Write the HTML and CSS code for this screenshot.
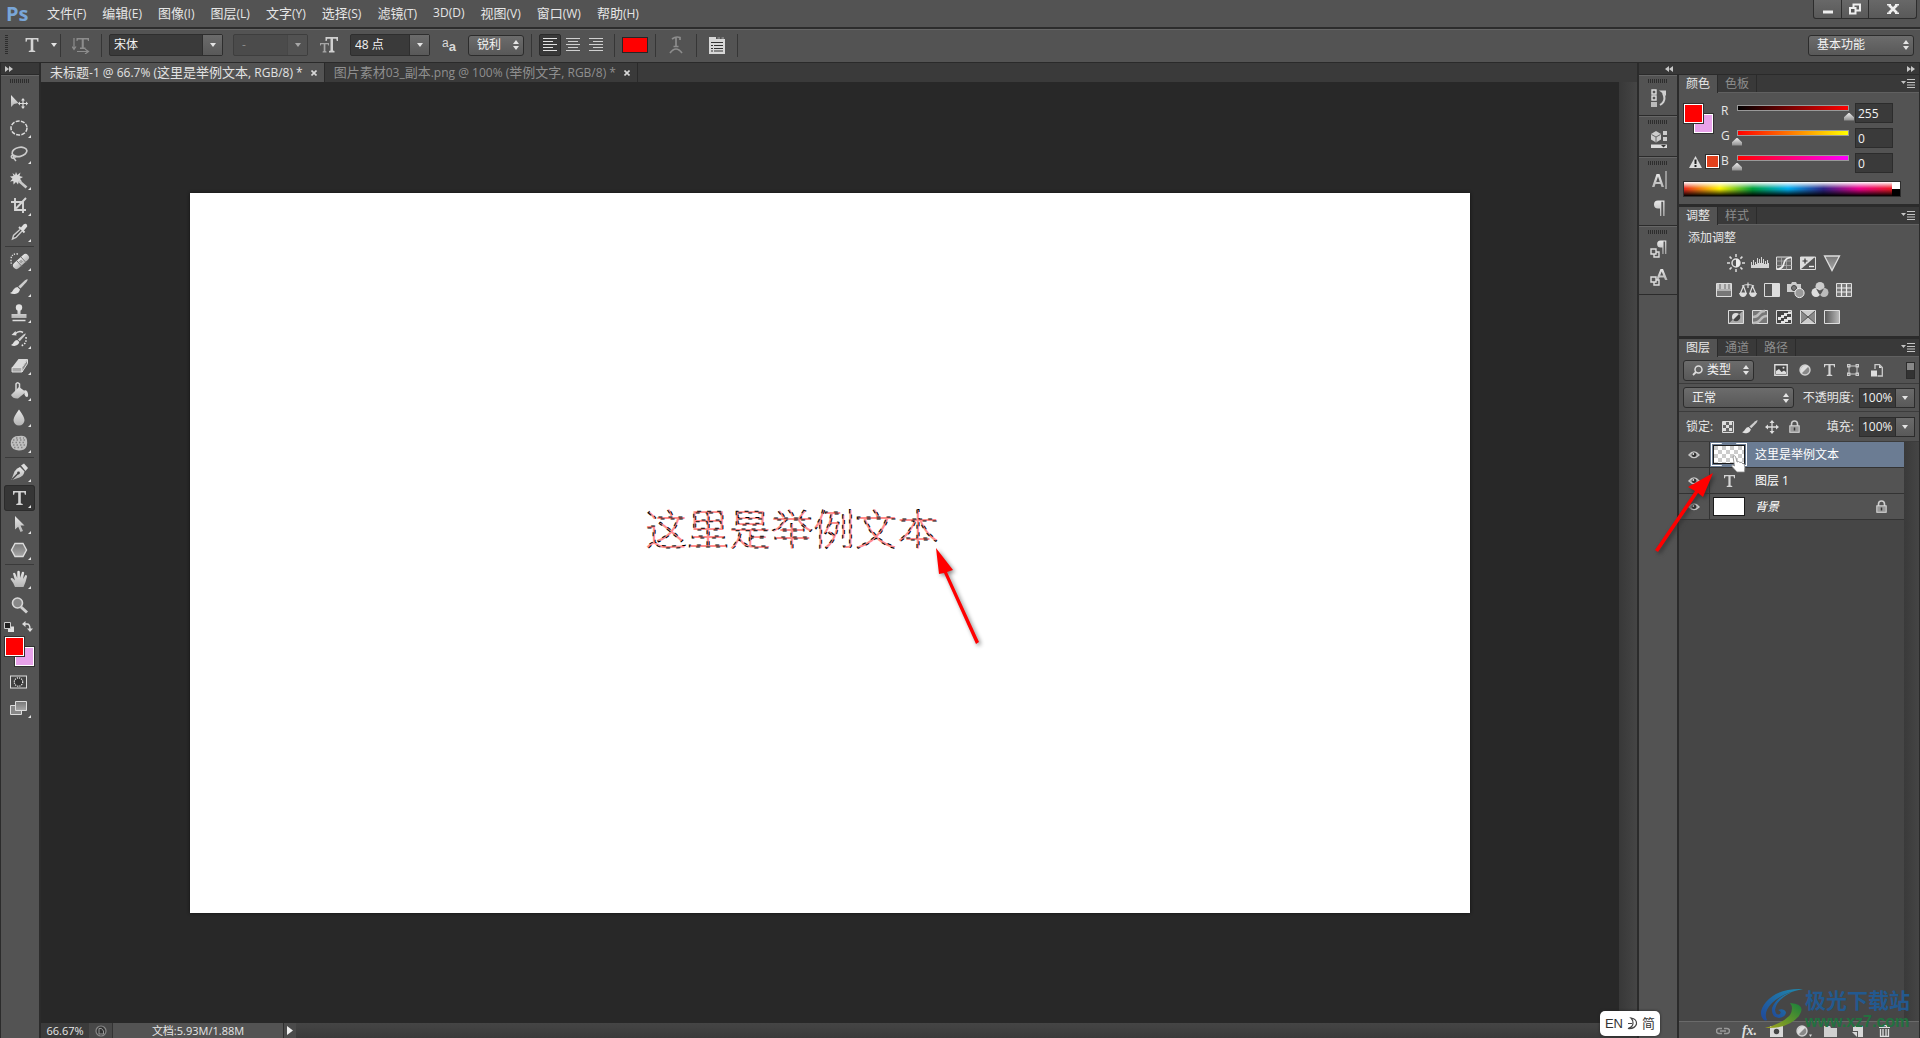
FILE: index.html
```html
<!DOCTYPE html>
<html lang="zh-CN">
<head>
<meta charset="utf-8">
<title>Ps</title>
<link rel="stylesheet" href="styles.css">
</head>
<body>
<svg class="defs" width="0" height="0" aria-hidden="true">
  <defs>
    <linearGradient id="metal" x1="0" y1="0" x2="0" y2="1"><stop offset="0" stop-color="#e8e8e8"/><stop offset="1" stop-color="#b4b4b4"/></linearGradient>
    <linearGradient id="dim" x1="0" y1="0" x2="0" y2="1"><stop offset="0" stop-color="#777"/><stop offset="1" stop-color="#a8a8a8"/></linearGradient>
    <linearGradient id="side" x1="0" y1="0" x2="1" y2="0"><stop offset="0" stop-color="#555"/><stop offset="1" stop-color="#bbb"/></linearGradient>
    <linearGradient id="swirlBlue" x1="0" y1="1" x2="1" y2="0"><stop offset="0" stop-color="#20489a"/><stop offset="1" stop-color="#1f8aae"/></linearGradient>
    <linearGradient id="swirlGreen" x1="0" y1="1" x2="1" y2="0"><stop offset="0" stop-color="#a5a51c"/><stop offset="1" stop-color="#17803c"/></linearGradient>
    <symbol id="caret" viewBox="0 0 6 4"><path d="M0 0H6L3 4z" fill="#e4e4e4"/></symbol>
    <symbol id="updown" viewBox="0 0 6 10"><path d="M0 4L3 0L6 4zM0 6H6L3 10z" fill="#e4e4e4"/></symbol>
    <symbol id="cross" viewBox="0 0 6 6"><path d="M0.500 0.500L5.500 5.500M5.500 0.500L0.500 5.500" stroke="currentColor" stroke-width="1.600"/></symbol>
    <symbol id="menu" viewBox="0 0 14 9"><path d="M0 2H5L2.500 5z" fill="#c4c4c4"/><path d="M6 .5H14M6 3.500H14M6 6H14M6 8.500H14" stroke="#c4c4c4"/></symbol>
    <symbol id="eye" viewBox="0 0 12 10"><path d="M1 5Q6-1 11 5Q6 10 1 5z" fill="#8b8b8b" stroke="#c6c6c6" stroke-width="1.400"/><circle cx="6" cy="4.800" r="2.200" fill="#2f2f2f"/><circle cx="5.300" cy="4" r=".9" fill="#ddd"/></symbol>
    <symbol id="padlock" viewBox="0 0 11 13"><path d="M2.500 6V4A3 3 0 0 1 8.500 4V6" fill="none" stroke="#cfcfcf" stroke-width="1.600"/><rect x=".8" y="5.800" width="9.400" height="6.500" fill="#999" stroke="#d8d8d8"/><path d="M5.500 7.500V10.500" stroke="#333" stroke-width="1.500"/></symbol>
    <symbol id="tee" viewBox="0 0 12 13"><path d="M0 0H12V3.500H11L10.400 1.400H7.200V11.400L9 12V13H3V12L4.800 11.400V1.400H1.600L1 3.500H0z" fill="#d4d4d4"/></symbol>
    <symbol id="pilcrow" viewBox="0 0 12 16"><path d="M11.500 .5H5A4 4 0 0 0 5 8.500H7V16H8.300V1.800H10.200V16H11.500z" fill="url(#metal)"/></symbol>
    <symbol id="halfdisc" viewBox="0 0 12 12"><circle cx="6" cy="6" r="5" fill="#888" stroke="#cfcfcf" stroke-width="1.400"/><path d="M2.500 9.500A5 5 0 0 1 9.500 2.500z" fill="#ddd"/></symbol>
    <symbol id="brush" viewBox="0 0 18 16"><path d="M17.500 0Q18 1 16.500 3L10.500 9.500L8.300 7.500L15 1.300z" fill="#cdcdcd"/><path d="M7.500 8L10 10.500Q9 14.500 5 15Q2 15.300 0 14Q2.500 13 3.500 10.500Q5 8 7.500 8z" fill="#e0e0e0"/></symbol>
  </defs>
</svg>

<header class="menubar">
  <strong class="logo">Ps</strong>
  <nav class="menus">
    <a href="#"><span class="han">文件</span>(F)</a><a href="#"><span class="han">编辑</span>(E)</a><a href="#"><span class="han">图像</span>(I)</a><a href="#"><span class="han">图层</span>(L)</a><a href="#"><span class="han">文字</span>(Y)</a><a href="#"><span class="han">选择</span>(S)</a><a href="#"><span class="han">滤镜</span>(T)</a><a href="#">3D(D)</a><a href="#"><span class="han">视图</span>(V)</a><a href="#"><span class="han">窗口</span>(W)</a><a href="#"><span class="han">帮助</span>(H)</a>
  </nav>
  <div class="winbtns">
    <button aria-label="最小化"><svg width="12" height="12" viewBox="0 0 12 12"><path d="M1 9H11" stroke="#eee" stroke-width="3"/></svg></button>
    <button aria-label="还原"><svg width="12" height="12" viewBox="0 0 12 12"><path d="M4.500 1.500H11V7.500H4.500z" fill="none" stroke="#eee" stroke-width="2"/><path d="M1 5H6.500V10.500H1z" fill="#555" stroke="#eee" stroke-width="2"/></svg></button>
    <button class="wide" aria-label="关闭"><svg width="12" height="10" viewBox="0 0 12 10"><path d="M2 1L10 9M10 1L2 9" stroke="#eee" stroke-width="2.600"/><path d="M0 .8H4M8 .8H12M0 9.200H4M8 9.200H12" stroke="#eee" stroke-width="1.600"/></svg></button>
  </div>
</header>

<section class="options">
  <span class="grip-v"></span>
  <button class="flat w44" aria-label="文字工具"><svg width="14" height="14"><use href="#tee"/></svg><svg width="6" height="4"><use href="#caret"/></svg></button>
  <i class="sep tight"></i>
  <button class="flat w40" aria-label="切换方向"><svg width="18" height="17" viewBox="0 0 18 17"><path d="M4.500 1H17V4H16L15.500 2.500H11.800V10.500H13.500V12H8V10.500H9.700V2.500H6L5.500 4H4.500z" fill="#8d8d8d"/><path d="M2 1V12M0 9.500L2 12.500L4 9.500M5 14.500H16M13 12L16.500 14.500L13 17" fill="none" stroke="#8d8d8d" stroke-width="1.200"/></svg></button>
  <i class="sep tight"></i>
  <label class="combo font"><select aria-label="字体"><option>宋体</option></select><span class="knob"><svg width="6" height="4"><use href="#caret"/></svg></span></label>
  <label class="combo style off"><select aria-label="字体样式" disabled><option>-</option></select><span class="knob"><svg width="6" height="4"><use href="#caret"/></svg></span></label>
  <span class="flat w42"><svg width="18" height="16" viewBox="0 0 18 16"><path d="M5.500 0H18V4H16.800L16.200 1.700H13V13.500L14.500 14V15.500H9V14L10.500 13.500V1.700H7.300L6.700 4H5.500z" fill="#d0d0d0"/><path d="M0 6H9V8.500H8.200L7.800 7.200H5.400V14L6.500 14.500V15.500H2.600V14.500L3.700 14V7.200H1.200L.8 8.500H0z" fill="#a5a5a5"/></svg></span>
  <label class="combo size"><select aria-label="字号"><option>48 点</option></select><span class="knob"><svg width="6" height="4"><use href="#caret"/></svg></span></label>
  <span class="flat w38 aa"><small>a</small><b>a</b></span>
  <label class="pick aamode"><select aria-label="消除锯齿"><option>锐利</option></select><svg width="6" height="10"><use href="#updown"/></svg></label>
  <i class="sep"></i>
  <div class="aligns">
    <button class="on" aria-label="左对齐"><svg width="16" height="14" viewBox="0 0 16 14"><path d="M1 .5H15M1 3.500H11M1 6.500H15M1 9.500H11M1 12.500H15" stroke="#e2e2e2"/></svg></button>
    <button aria-label="居中对齐"><svg width="16" height="14" viewBox="0 0 16 14"><path d="M1 .5H15M3 3.500H13M1 6.500H15M3 9.500H13M1 12.500H15" stroke="#d0d0d0"/></svg></button>
    <button aria-label="右对齐"><svg width="16" height="14" viewBox="0 0 16 14"><path d="M1 .5H15M5 3.500H15M1 6.500H15M5 9.500H15M1 12.500H15" stroke="#d0d0d0"/></svg></button>
  </div>
  <i class="sep"></i>
  <button class="textcolor" aria-label="文本颜色"></button>
  <i class="sep last"></i>
  <button class="flat w40" aria-label="变形文字"><svg width="14" height="18" viewBox="0 0 14 18"><path d="M3 3Q7 0 11 1.500V4M7 1.500V10.500M4.500 10.500H9.500M1 17Q7 9 13 17" fill="none" stroke="#8d8d8d" stroke-width="1.700"/></svg></button>
  <i class="sep tight"></i>
  <button class="flat w40" aria-label="字符面板"><svg width="16" height="17" viewBox="0 0 16 17"><path d="M0 0H7V2H16V17H0z" fill="#d8d8d8"/><path d="M8.500 1H11M12.500 1H15" stroke="#aaa"/><path d="M2 5.500H14M2 8.500H4M5 8.500H14M2 11.500H4M5 11.500H14M2 14H4M5 14H14" stroke="#333" stroke-width="1.200"/></svg></button>
  <i class="sep tight"></i>
  <label class="pick workspace-pick"><select aria-label="工作区"><option>基本功能</option></select><svg width="6" height="10"><use href="#updown"/></svg></label>
</section>

<main class="workspace">
  <aside class="tools">
    <div class="dockhead left"><svg width="8" height="6" viewBox="0 0 8 6"><path d="M0 0L4 3L0 6zM4 0L8 3L4 6z" fill="#c8c8c8"/></svg></div>
    <div class="toolbody">
      <span class="grip-h"></span>
      <div class="toollist">
      <button aria-label="移动"><svg viewBox="0 0 36 26"><path d="M10 6V18L13 15L17.500 14z" fill="url(#metal)"/><path d="M22 10V19M17.500 14.500H26.500" stroke="#ddd" stroke-width="1.200"/><path d="M20 11.500L22 9L24 11.500zM20 17.500L22 20L24 17.500zM19 12.500L17 14.500L19 16.500zM25 12.500L27 14.500L25 16.500z" fill="#ddd"/></svg></button>
      <button class="more" aria-label="椭圆选框"><svg viewBox="0 0 36 26"><ellipse cx="18" cy="13" rx="8" ry="7" fill="none" stroke="#ddd" stroke-width="1.500" stroke-dasharray="4 1.300"/></svg></button>
      <button class="more" aria-label="套索"><svg viewBox="0 0 36 26"><ellipse cx="18.500" cy="11" rx="7.500" ry="4.500" transform="rotate(-12 18 11)" fill="none" stroke="#ccc" stroke-width="1.700"/><path d="M12 14Q9 15 11 17Q15 18 14 15Q12 13 12.500 17L15 20" fill="none" stroke="#ccc" stroke-width="1.400"/></svg></button>
      <button class="more" aria-label="魔棒"><svg viewBox="0 0 36 26"><path d="M15 5L16.300 8L19.500 5.500L18.500 9L22 10L19 11.700L21 14.500L17.700 14.500L17 17.500L15 15L12.500 17.500L12.300 14L9 14.500L11.500 11.700L9 9.500L12.500 9L11.500 6L14 8z" fill="#d8d8d8"/><path d="M18 14L25.500 20.500" stroke="#c8c8c8" stroke-width="2.600"/></svg></button>
      <button class="more" aria-label="裁剪"><svg viewBox="0 0 36 26"><path d="M14 5V17H25M10 9H22V20M25 5L15 15.500" fill="none" stroke="#d6d6d6" stroke-width="1.900"/></svg></button>
      <button class="more" aria-label="吸管"><svg viewBox="0 0 36 26"><path d="M19.500 9L22.500 5.500Q25 4 26 6Q27 7.500 25 9L22 12.500z" fill="#e0e0e0"/><path d="M18 8L23.500 13.500" stroke="#ddd" stroke-width="2"/><path d="M19 10.500L12.500 16.500L11.500 20L15 18.500L21 12" fill="#444" stroke="#ccc" stroke-width="1.400"/></svg></button>
      <hr>
      <button class="more" aria-label="修复画笔"><svg viewBox="0 0 36 26"><path d="M17 6Q10 5 10 12Q10 16 11 17" fill="none" stroke="#ddd" stroke-width="1.400" stroke-dasharray="1.300 1.300"/><rect x="10.500" y="10" width="19" height="7" rx="3.500" transform="rotate(-42 20 13.500)" fill="url(#metal)"/><path d="M16 13L21 18.500M20 9L25 14.500" stroke="#777"/><path d="M18.500 13.500H22M20 12V15.500" stroke="#777" stroke-dasharray="1 1"/></svg></button>
      <button class="more" aria-label="画笔"><svg viewBox="0 0 36 26"><use href="#brush" x="9" y="5" width="18" height="16"/></svg></button>
      <button class="more" aria-label="仿制图章"><svg viewBox="0 0 36 26"><circle cx="18" cy="7.500" r="3.200" fill="#e2e2e2"/><path d="M16.500 9H19.500V14H25.500V18H10.500V14H16.500z" fill="url(#metal)"/><path d="M11.500 20.500H24.500" stroke="#ddd" stroke-width="1.500"/></svg></button>
      <button class="more" aria-label="历史记录画笔"><svg viewBox="0 0 36 26"><use href="#brush" x="10" y="7" width="15" height="14"/><path d="M14 8Q18 4 22 6.500" fill="none" stroke="#ddd" stroke-width="1.500"/><path d="M10.500 9L14.500 5L15.500 9.500z" fill="#ddd"/><path d="M25 11Q26 18 20 20" fill="none" stroke="#eee" stroke-width="1.500" stroke-dasharray="1.500 1.500"/></svg></button>
      <button class="more" aria-label="橡皮擦"><svg viewBox="0 0 36 26"><path d="M11 15.500L17.500 7H26.500L21 15.500z" fill="#dadada"/><path d="M11 15.500H21V20H11z" fill="#a8a8a8" stroke="#ddd"/><path d="M21 15.500L26.500 7.500V11.500L21 20z" fill="#8a8a8a" stroke="#ddd"/></svg></button>
      <button class="more" aria-label="油漆桶"><svg viewBox="0 0 36 26"><path d="M10 17L18 9L25 14L17 20.500Q12 21 10 17z" fill="url(#metal)"/><path d="M15 13V6Q16.500 3.500 18.500 6V12" fill="none" stroke="#d8d8d8" stroke-width="1.500"/><path d="M23.500 12Q27.500 12 27 18.500Q24.500 20 23.500 16.500z" fill="#ddd"/></svg></button>
      <button class="more" aria-label="模糊"><svg viewBox="0 0 36 26"><path d="M18 5.500Q23.500 13 23.500 16A5.500 5.500 0 0 1 12.500 16Q12.500 13 18 5.500z" fill="url(#metal)"/></svg></button>
      <button class="more" aria-label="海绵"><svg viewBox="0 0 36 26"><path d="M10 11Q12 5.500 18 6Q25 5 26 10Q27 17 23 19.500Q17 21.500 12.500 19Q9 16.500 10 11z" fill="#c0c0c0"/><path d="M12 10H25M11 12.500H25M12 15H25M13 17.500H23M15 8H23" stroke="#858585" stroke-width="1.300" stroke-dasharray="1.500 2"/></svg></button>
      <hr>
      <button class="more" aria-label="钢笔"><svg viewBox="0 0 36 26"><path d="M20 6.500L23 4.500L27 9L24.500 12z" fill="#ddd"/><path d="M19 8L23.500 12.500Q22.500 17 18.500 18.500L11 21L10.500 20.500L13.500 12.500Q15.500 9 19 8z" fill="url(#metal)"/><path d="M11 20.500L17 14.500" stroke="#444" stroke-width="1.200"/><circle cx="17.500" cy="14" r="1.400" fill="#444"/></svg></button>
      <button class="more on" aria-label="文字"><svg viewBox="0 0 36 26"><use href="#tee" x="12" y="6" width="13" height="14"/></svg></button>
      <button class="more" aria-label="路径选择"><svg viewBox="0 0 36 26"><path d="M14 5L23.500 14.500H19.500L22 20L19.500 21L17.200 15.700L14 18.500z" fill="url(#metal)"/></svg></button>
      <button class="more" aria-label="多边形"><svg viewBox="0 0 36 26"><path d="M14 6.500H22L25.500 13L22 19.500H14L10.500 13z" fill="url(#dim)" stroke="#ddd" stroke-width="1.400"/></svg></button>
      <hr>
      <button class="more" aria-label="抓手"><svg viewBox="0 0 36 26"><path d="M14 21Q13 17.500 9.500 13Q10.500 11 13 13.500L14 14.500L12 7.500Q13.200 6 14.300 7.500L16.200 12L16.300 5.500Q17.600 4 18.800 5.500L19 12L21 6Q22.500 5 23.200 6.700L22 13L24.500 9Q26 8.500 26 10.500Q25 15.500 22.500 21z" fill="url(#metal)"/></svg></button>
      <button aria-label="缩放"><svg viewBox="0 0 36 26"><path d="M20 15L26 20.500" stroke="#d0d0d0" stroke-width="3"/><circle cx="16.500" cy="11" r="5" fill="#888" stroke="#d8d8d8" stroke-width="1.600"/></svg></button>
      </div>
      <div class="swaptools">
        <svg width="10" height="10" viewBox="0 0 10 10"><path d="M4 4.500H10V10H4z" fill="#e0e0e0"/><path d="M.5 .5H6.500V6.500H.5z" fill="#222" stroke="#ccc"/></svg>
        <svg width="11" height="11" viewBox="0 0 11 11"><path d="M3 3H5Q8 3 8 8" fill="none" stroke="#ddd" stroke-width="1.400"/><path d="M0 3L3.500 0V6zM5 7.500H11L8 11z" fill="#ddd"/></svg>
      </div>
      <div class="swatches big"><button class="bg" aria-label="背景色"></button><button class="fg" aria-label="前景色"></button></div>
      <div class="toollist modes">
      <button aria-label="快速蒙版"><svg viewBox="0 0 36 26"><rect x="9.500" y="7" width="16" height="12" fill="#444" stroke="#ddd"/><circle cx="17.500" cy="13" r="4.200" fill="#333" stroke="#eee" stroke-width="1.200" stroke-dasharray="1.200 1"/></svg></button>
      <button class="more" aria-label="屏幕模式"><svg viewBox="0 0 36 26"><path d="M9.500 10.500H20.500V19.500H9.500z" fill="#888" stroke="#ddd"/><path d="M14.500 6.500H25.500V15.500H14.500z" fill="url(#dim)" stroke="#ddd"/></svg></button>
      </div>
    </div>
  </aside>

  <section class="document">
    <div class="tabs">
      <div class="tab on"><a href="#"><span class="han">未标题</span>-1 @ 66.7% (<span class="han">这里是举例文本</span>, RGB/8) *</a><button aria-label="关闭"><svg width="6" height="6"><use href="#cross"/></svg></button></div>
      <div class="tab"><a href="#"><span class="han">图片素材</span>03_<span class="han">副本</span>.png @ 100% (<span class="han">举例文字</span>, RGB/8) *</a><button aria-label="关闭"><svg width="6" height="6"><use href="#cross"/></svg></button></div>
    </div>
    <div class="stage">
      <div class="artboard">
        <svg class="ants" width="320" height="80" viewBox="0 0 320 80"><text x="1" y="54">这里是举例文本</text></svg>
        <svg class="pointer-a" width="60" height="110" viewBox="0 0 60 110"><path d="M10 5L27 27L21 29L53 99L50 101L18 30L13 31z" fill="red"/></svg>
      </div>
    </div>
    <div class="vscroll"></div>
    <footer class="status">
      <span class="zoom">66.67%</span>
      <span class="cam"><svg width="12" height="12" viewBox="0 0 12 12"><circle cx="6" cy="6" r="5" fill="#333" stroke="#888" stroke-width="1.200"/><path d="M4 9V3.500H6.500L8.500 6V9z" fill="none" stroke="#999"/></svg></span>
      <span class="doc">文档:5.93M/1.88M</span>
      <button class="go" aria-label="更多"><svg width="6" height="9" viewBox="0 0 6 9"><path d="M0 0L6 4.500L0 9z" fill="#eee"/></svg></button>
      <span class="hscroll"></span>
    </footer>
  </section>

  <div class="right">
    <div class="dockhead both">
      <svg width="8" height="6" viewBox="0 0 8 6"><path d="M4 0L0 3L4 6zM8 0L4 3L8 6z" fill="#c8c8c8"/></svg>
      <svg width="8" height="6" viewBox="0 0 8 6"><path d="M0 0L4 3L0 6zM4 0L8 3L4 6z" fill="#c8c8c8"/></svg>
    </div>
    <aside class="dock">
      <div class="dockgroup"><span class="grip-h"></span>
        <button aria-label="历史记录"><svg width="16" height="18" viewBox="0 0 16 18"><path d="M1 1H5V5H1zM1 7H5V11H1z" fill="#555" stroke="#ddd" stroke-width="1.400"/><path d="M0 13H6V18H0z" fill="#bbb"/><path d="M9 16Q16 12 12 4" fill="none" stroke="#d0d0d0" stroke-width="2"/><path d="M8 1.500H15V7z" fill="#d0d0d0"/></svg></button></div>
      <div class="dockgroup"><span class="grip-h"></span>
        <button aria-label="属性"><svg width="17" height="18" viewBox="0 0 17 18"><path d="M0 4L5 1L10 4V9.500L5 12.500L0 9.500z" fill="#ccc"/><path d="M0.500 4.500L5 7L9.500 4.500M5 7V12" fill="none" stroke="#666"/><path d="M12 1H16V5H12zM12 7H16V11H12z" fill="#ccc"/><path d="M0 14.500H16V18H0z" fill="#ddd"/><path d="M10 15H15L12.500 17.500z" fill="#333"/></svg></button></div>
      <div class="dockgroup tall"><span class="grip-h"></span>
        <button aria-label="字符"><svg width="15" height="18" viewBox="0 0 15 18"><path d="M0 16L4.500 3H7.500L12 16H9.500L8.500 13H3.500L2.500 16zM4.200 11H7.800L6 5.500z" fill="url(#metal)" fill-rule="evenodd"/><path d="M14 0V18" stroke="#ddd"/></svg></button>
        <button aria-label="段落"><svg width="12" height="16"><use href="#pilcrow"/></svg></button></div>
      <div class="dockgroup tall"><span class="grip-h"></span>
        <button aria-label="段落样式"><svg width="18" height="18" viewBox="0 0 18 18"><use href="#pilcrow" x="6" y="0" width="11" height="14"/><path d="M4 12H9V17H4z" fill="#555" stroke="#ddd" stroke-width="1.400"/><path d="M1 9H6V14H1z" fill="#555" stroke="#ddd" stroke-width="1.400"/></svg></button>
        <button aria-label="字符样式"><svg width="18" height="18" viewBox="0 0 18 18"><path d="M6 12L10.500 1H13L17.500 12H15L14 9.500H9.500L8.500 12zM10.200 7.500H13.200L11.700 3.500z" fill="url(#metal)" fill-rule="evenodd"/><path d="M4 12H9V17H4z" fill="#555" stroke="#ddd" stroke-width="1.400"/><path d="M1 9H6V14H1z" fill="#555" stroke="#ddd" stroke-width="1.400"/></svg></button></div>
    </aside>

    <div class="panels">
      <section class="panel">
        <div class="ptabs"><a class="on" href="#">颜色</a><a href="#">色板</a><button aria-label="菜单"><svg width="14" height="9"><use href="#menu"/></svg></button></div>
        <div class="color">
          <div class="colorleft">
            <div class="swatches small"><button class="bg" aria-label="背景色"></button><button class="fg" aria-label="前景色"></button></div>
            <div class="gamut"><svg width="13" height="12" viewBox="0 0 13 12"><path d="M6.500 0L13 12H0z" fill="#ddd"/><path d="M6.500 3.500V8M6.500 9V11" stroke="#222" stroke-width="2"/></svg><i></i></div>
          </div>
          <div class="channels">
            <label for="r">R</label><input class="range r" id="r" type="range" min="0" max="255" value="255"><input class="num" type="text" aria-label="R 值" value="255">
            <label for="g">G</label><input class="range g" id="g" type="range" min="0" max="255" value="0"><input class="num" type="text" aria-label="G 值" value="0">
            <label for="b">B</label><input class="range b" id="b" type="range" min="0" max="255" value="0"><input class="num" type="text" aria-label="B 值" value="0">
          </div>
          <div class="spectrum"><span class="hues"></span><span class="bw"></span></div>
        </div>
      </section>

      <section class="panel">
        <div class="ptabs"><a class="on" href="#">调整</a><a href="#">样式</a><button aria-label="菜单"><svg width="14" height="9"><use href="#menu"/></svg></button></div>
        <div class="adjust">
          <p>添加调整</p>
          <div class="adjrow">
            <button aria-label="亮度/对比度"><svg viewBox="0 0 18 18"><circle cx="9" cy="9" r="4" fill="#555" stroke="#ddd" stroke-width="1.500"/><path d="M9 5A4 4 0 0 1 9 13z" fill="#eee"/><path d="M9 0V3M9 15V18M0 9H3M15 9H18M2.600 2.600L4.600 4.600M13.400 13.400L15.400 15.400M2.600 15.400L4.600 13.400M13.400 4.600L15.400 2.600" stroke="#ddd" stroke-width="1.500"/></svg></button>
            <button aria-label="色阶"><svg viewBox="0 0 18 18"><path d="M0 14V8H1V11H2V6H3V11H4V8H5V10H6V4H7V9H8V5H9V9H10V3H11V9H12V5H13V10H14V7H15V10H16V6H17V9H18V14z" fill="#d4d4d4"/></svg></button>
            <button aria-label="曲线"><svg viewBox="0 0 18 18"><path d="M1.500 3H16.500V15.500H1.500z" fill="#666" stroke="#ddd"/><path d="M6.500 3V15.500M11.500 3V15.500M1.500 7H16.500M1.500 11.500H16.500" stroke="#aaa" stroke-width=".8"/><path d="M2 15Q8 15 9 9Q10 4 16 3.500" fill="none" stroke="#eee" stroke-width="1.600"/></svg></button>
            <button aria-label="曝光度"><svg viewBox="0 0 18 18"><path d="M1.500 3H16.500V15.500H1.500z" fill="#555" stroke="#ddd"/><path d="M1.500 3H16L1.500 15.500z" fill="#ddd"/><path d="M3.500 7H8.500M6 4.500V9.500" stroke="#333" stroke-width="1.200"/><path d="M10 12.500H15" stroke="#eee" stroke-width="1.400"/></svg></button>
            <button aria-label="自然饱和度"><svg viewBox="0 0 18 18"><path d="M1.500 2H16.500L9 16.500z" fill="url(#dim)" stroke="#ddd" stroke-width="1.300"/></svg></button>
          </div>
          <div class="adjrow">
            <button aria-label="色相/饱和度"><svg viewBox="0 0 18 18"><path d="M1.500 2.500H16.500V15.500H1.500z" fill="#777" stroke="#ddd"/><path d="M2 3H16V8H2z" fill="#ccc"/><path d="M5 3V8M10 3V8M14 3V8" stroke="#999" stroke-width="2"/><path d="M2 9H16" stroke="#eee"/></svg></button>
            <button aria-label="色彩平衡"><svg viewBox="0 0 18 18"><path d="M3 5Q9 2 15 5M9 1.500V7M4.500 5L1.500 12H7L4.500 5M13.500 5L11 12H16.500L13.500 5" fill="none" stroke="#ddd" stroke-width="1.200"/><path d="M0 12H8Q7 16 4 16Q1 16 0 12zM10 12H18Q17 16 14 16Q11 16 10 12z" fill="#ddd"/></svg></button>
            <button aria-label="黑白"><svg viewBox="0 0 18 18"><path d="M1.500 2.500H16.500V15.500H1.500z" fill="#555" stroke="#ddd"/><path d="M9 3H16V15H9z" fill="#ddd"/></svg></button>
            <button aria-label="照片滤镜"><svg viewBox="0 0 18 18"><path d="M0 3H4L5 1H9L10 3H14V11H0z" fill="#ccc"/><circle cx="7" cy="7" r="2.500" fill="#777" stroke="#444"/><circle cx="12.500" cy="12" r="4.600" fill="#999" stroke="#eee"/></svg></button>
            <button aria-label="通道混合器"><svg viewBox="0 0 18 18"><circle cx="9" cy="5.500" r="4.500" fill="#ccc"/><circle cx="5" cy="11.500" r="4.500" fill="#ddd"/><circle cx="13" cy="11.500" r="4.500" fill="#bbb"/><path d="M5 7.500L9 9.500L13 7.500L10.500 12L9 14L7.500 12z" fill="#555"/></svg></button>
            <button aria-label="颜色查找"><svg viewBox="0 0 18 18"><path d="M1.500 2.500H16.500V15.500H1.500z" fill="#777" stroke="#ddd"/><path d="M6.500 3V15M11.500 3V15M2 7H16M2 11H16" stroke="#eee" stroke-width="1.200"/></svg></button>
          </div>
          <div class="adjrow">
            <button aria-label="反相"><svg viewBox="0 0 18 18"><path d="M1.500 2.500H16.500V15.500H1.500z" fill="#aaa" stroke="#ddd"/><path d="M2 15V3H16z" fill="#555"/><circle cx="9" cy="9" r="4" fill="#ddd"/><path d="M6 12A4 4 0 0 0 12 6z" fill="#444"/></svg></button>
            <button aria-label="色调分离"><svg viewBox="0 0 18 18"><path d="M1.500 2.500H16.500V15.500H1.500z" fill="#777" stroke="#ddd"/><path d="M2 9Q6 9 8 6Q10 3 14 3M2 15Q7 15 10 11Q12 8 16 8" fill="none" stroke="#bbb" stroke-width="2.500"/></svg></button>
            <button aria-label="阈值"><svg viewBox="0 0 18 18"><path d="M1.500 2.500H16.500V15.500H1.500z" fill="#444" stroke="#ddd"/><path d="M3 12V9H6V7H9V5H13V3.500H16V6H12V8H9V10H6V12zM6 15V13H9V11H12V9H16V12H13V14H10V15z" fill="#e4e4e4"/></svg></button>
            <button aria-label="可选颜色"><svg viewBox="0 0 18 18"><path d="M1.500 2.500H16.500V15.500H1.500z" fill="#888" stroke="#ddd"/><path d="M2 3L9 9L16 3zM2 15L9 9L16 15z" fill="#ccc"/><path d="M2 3L16 15M16 3L2 15" stroke="#555"/></svg></button>
            <button aria-label="渐变映射"><svg viewBox="0 0 18 18"><path d="M1.500 2.500H16.500V15.500H1.500z" fill="url(#side)" stroke="#ddd"/></svg></button>
          </div>
        </div>
      </section>

      <section class="panel layers">
        <div class="ptabs"><a class="on" href="#">图层</a><a href="#">通道</a><a href="#">路径</a><button aria-label="菜单"><svg width="14" height="9"><use href="#menu"/></svg></button></div>
        <div class="lrow filter">
          <label class="pick kind"><svg class="lens" width="11" height="11" viewBox="0 0 11 11"><circle cx="6.500" cy="4.500" r="3.500" fill="none" stroke="#ddd" stroke-width="1.500"/><path d="M4 7L1 10" stroke="#ddd" stroke-width="1.800"/></svg><select aria-label="筛选"><option>类型</option></select><svg width="6" height="10"><use href="#updown"/></svg></label>
          <div class="filters">
            <button aria-label="像素"><svg width="14" height="12" viewBox="0 0 14 12"><path d="M.8 .8H13.200V11.200H.8z" fill="#444" stroke="#ddd" stroke-width="1.400"/><path d="M2 10V7L5 5L7.500 8L10 6.500L12 8V10z" fill="#ddd"/><circle cx="9.500" cy="3.800" r="1" fill="#ddd"/></svg></button>
            <button aria-label="调整图层"><svg width="12" height="12"><use href="#halfdisc"/></svg></button>
            <button aria-label="文字图层"><svg width="11" height="12"><use href="#tee"/></svg></button>
            <button aria-label="形状图层"><svg width="12" height="12" viewBox="0 0 12 12"><path d="M2 2H10V10H2z" fill="none" stroke="#ccc"/><path d="M0 0H3.500V3.500H0zM8.500 0H12V3.500H8.500zM0 8.500H3.500V12H0zM8.500 8.500H12V12H8.500z" fill="#ccc"/><path d="M1.500 1.500H2.200M9.800 1.500H10.500M1.500 10.500H2.200M9.800 10.500H10.500" stroke="#444"/></svg></button>
            <button aria-label="智能对象"><svg width="12" height="13" viewBox="0 0 12 13"><path d="M4 5V.7H8.500L11.300 3.500V12H6.500" fill="none" stroke="#ccc" stroke-width="1.300"/><path d="M8 1V4H11M0 6.500H6V12.500H0z" fill="#ddd"/></svg></button>
          </div>
          <button class="switch" aria-label="筛选开关"><i></i></button>
        </div>
        <div class="lrow">
          <label class="pick blend"><select aria-label="混合模式"><option>正常</option></select><svg width="6" height="10"><use href="#updown"/></svg></label>
          <label class="lbl" for="op">不透明度:</label>
          <span class="pct"><input id="op" type="text" value="100%"><button aria-label="展开"><svg width="6" height="4"><use href="#caret"/></svg></button></span>
        </div>
        <div class="lrow locking">
          <span class="lock">锁定:</span>
          <div class="locks">
            <button aria-label="锁定透明像素"><svg width="12" height="12" viewBox="0 0 12 12"><path d="M.5 .5H11.500V11.500H.5z" fill="#666" stroke="#ddd"/><path d="M1 1H4V4H1zM7 1H10V4H7zM4 4H7V7H4zM1 7H4V10H1zM7 7H10V10H7z" fill="#ddd"/></svg></button>
            <button aria-label="锁定图像像素"><svg width="16" height="14"><use href="#brush"/></svg></button>
            <button aria-label="锁定位置"><svg width="14" height="14" viewBox="0 0 14 14"><path d="M7 1V13M1 7H13" stroke="#ddd" stroke-width="1.300"/><path d="M4.500 3L7 0L9.500 3zM4.500 11L7 14L9.500 11zM3 4.500L0 7L3 9.500zM11 4.500L14 7L11 9.500z" fill="#ddd"/></svg></button>
            <button aria-label="锁定全部"><svg width="11" height="13"><use href="#padlock"/></svg></button>
          </div>
          <label class="lbl" for="fill">填充:</label>
          <span class="pct"><input id="fill" type="text" value="100%"><button aria-label="展开"><svg width="6" height="4"><use href="#caret"/></svg></button></span>
        </div>
        <div class="listwrap">
          <ul class="list">
            <li class="on"><span class="vis"><svg width="12" height="10"><use href="#eye"/></svg></span><span class="thumb checks"></span><span class="name">这里是举例文本</span>
              <svg class="hand" width="16" height="18" viewBox="0 0 16 18"><path d="M3 1.500Q4.500 0 5.500 1.500L7 7L8.500 6.500L10 7.500L11.500 7.200L12.500 8.500L14 8.500Q15.500 12 14.500 17H7L2 11.500Q1 9.500 3 10L4.500 11z" fill="#fff" stroke="#888" stroke-width=".8"/></svg></li>
            <li><span class="vis"><svg width="12" height="10"><use href="#eye"/></svg></span><span class="thumb type"><svg width="11" height="12"><use href="#tee"/></svg></span><span class="name">图层 1</span></li>
            <li><span class="vis"><svg width="12" height="10"><use href="#eye"/></svg></span><span class="thumb white"></span><em class="name">背景</em><svg class="locked" width="11" height="13"><use href="#padlock"/></svg></li>
          </ul>
          <div class="lscroll"></div>
          <svg class="pointer-b" width="70" height="90" viewBox="0 0 70 90"><path d="M63 4L53 28L48 24L8 83L5 81L45 22L38 18z" fill="red"/></svg>
        </div>
        <footer class="lfoot">
          <button aria-label="链接"><svg width="14" height="8" viewBox="0 0 14 8"><path d="M6 1.500H3A2.500 2.500 0 0 0 3 6.500H6M8 1.500H11A2.500 2.500 0 0 1 11 6.500H8M4 4H10" fill="none" stroke="#999" stroke-width="1.500"/></svg></button>
          <button class="fx" aria-label="图层样式">fx.</button>
          <button aria-label="蒙版"><svg width="13" height="11" viewBox="0 0 13 11"><path d="M0 0H13V11H0z" fill="#d8d8d8"/><circle cx="6.500" cy="5.500" r="2.700" fill="#444"/></svg></button>
          <button aria-label="调整"><svg width="16" height="12" viewBox="0 0 16 12"><use href="#halfdisc" width="12" height="12"/><path d="M13 9.500H16L14.500 12z" fill="#ddd"/></svg></button>
          <button aria-label="新建组"><svg width="13" height="11" viewBox="0 0 13 11"><path d="M0 0H6L7 2H13V11H0z" fill="#d0d0d0"/></svg></button>
          <button aria-label="新建图层"><svg width="11" height="11" viewBox="0 0 11 11"><path d="M1 0H11V11H6V5H1z" fill="#d8d8d8"/><path d="M0 6H5V11z" fill="#d8d8d8"/></svg></button>
          <button aria-label="删除"><svg width="11" height="12" viewBox="0 0 11 12"><path d="M0 2.500H11M3.500 2V.6H7.500V2" fill="none" stroke="#ddd" stroke-width="1.200"/><path d="M1.500 4V11.400H9.500V4M4 4V11M7 4V11" fill="none" stroke="#ddd" stroke-width="1.300"/></svg></button>
        </footer>
      </section>
    </div>
  </div>
</main>

<div class="ime"><span>EN</span><svg width="11" height="13" viewBox="0 0 11 13"><path d="M4 1Q10 2 9.500 7Q8 12 1 11.500Q6 10 6 6Q6 3 4 1zM1 6.500H5" fill="none" stroke="#444" stroke-width="1.200"/></svg><span>简</span></div>
<div class="brand">
  <svg width="43" height="41" viewBox="0 0 43 41"><path d="M43 1Q18 0 6 14Q-3 25 4 32Q5 33 7 32Q3 24 12 15Q22 5 43 1z" fill="url(#swirlBlue)"/><path d="M32 4Q16 9 12 20Q11 29 19 30Q26 29 26 24Q24 20 18 22Q22 23 20 26Q16 28 15 22Q16 12 32 4z" fill="url(#swirlBlue)"/><path d="M30 15Q47 16 39 28Q28 41 5 40Q22 36 30 27Q34 20 30 15z" fill="url(#swirlGreen)"/></svg>
  <div><b>极光下载站</b><span>www.xz7.com</span></div>
</div>
</body>
</html>
```
FILE: styles.css
```css
* { box-sizing: border-box; }
html, body { height: 100%; }
body {
  margin: 0;
  display: flex;
  flex-direction: column;
  position: relative;
  overflow: hidden;
  background: #535353;
  color: #e6e6e6;
  font: 12px/16px "Open Sans", "Noto Sans CJK SC", sans-serif;
}
a { color: inherit; text-decoration: none; }
button {
  margin: 0; padding: 0; border: 0; background: none; color: inherit; font: inherit;
  display: flex; align-items: center; justify-content: center;
}
svg { display: block; flex: none; }
select, input { font: inherit; color: #f2f2f2; margin: 0; border-radius: 0; }
select { appearance: none; background: none; border: 0; outline: 0; }
.defs { position: absolute; }
.han { font-size: 13px; }

/* menu bar */
.menubar {
  flex: none; display: flex; align-items: center; height: 29px;
  border-bottom: 2px solid #2c2c2c; padding-left: 6px;
}
.logo { width: 33px; font: bold 20px/24px "Open Sans", sans-serif; color: #79a6d8; }
.menus { display: flex; flex: 1; padding-bottom: 1px; }
.menus a { padding: 0 8px; white-space: nowrap; }
.winbtns {
  display: flex; align-self: flex-start; margin-right: 3px; height: 19px;
  border: 1px solid #2d2d2d; border-top: 0; border-radius: 0 0 3px 3px;
  background: linear-gradient(#686868, #595959);
}
.winbtns button { width: 27px; }
.winbtns button + button { border-left: 1px solid #2d2d2d; }
.winbtns .wide { width: 48px; }

/* options bar */
.options {
  flex: none; display: flex; align-items: center; height: 34px;
  border-top: 1px solid #666; border-bottom: 1px solid #2a2a2a; padding: 0 6px 2px 5px;
}
.grip-v { width: 3px; height: 20px; margin-right: 8px; background: repeating-linear-gradient(#2d2d2d 0 1px, #535353 1px 2px); }
.flat { display: flex; align-items: center; justify-content: center; height: 24px; flex: none; }
.w38 { width: 38px; } .w40 { width: 40px; } .w42 { width: 42px; } .w44 { width: 44px; gap: 12px; padding-left: 6px; }
.sep { flex: none; width: 1px; height: 23px; margin: 0 7px; background: #363636; }
.sep.tight { margin: 0; }
.sep.last { margin-right: 0; }
.combo {
  flex: none; display: flex; position: relative; height: 22px; background: #3a3a3a;
  border: 1px solid #2e2e2e; border-radius: 2px;
}
.combo select { flex: 1; min-width: 0; padding: 0 4px; }
.knob {
  flex: none; width: 20px; display: flex; align-items: center; justify-content: center;
  background: linear-gradient(#6b6b6b, #595959); border-left: 1px solid #2e2e2e; pointer-events: none;
}
.font { width: 114px; margin: 0 10px 0 7px; }
.style { width: 75px; }
.size { width: 80px; }
.off { background: #4b4b4b; border-color: #3e3e3e; }
.off select { color: #8a8a8a; opacity: 1; padding-left: 8px; }
.off .knob { background: #585858; border-color: #454545; opacity: .6; }
.aa { height: 18px; color: #dadada; }
.aa small { font: 12px/14px "Liberation Sans", sans-serif; align-self: flex-start; }
.aa b { font: bold 13px/14px "Liberation Sans", sans-serif; align-self: flex-end; }
.pick {
  flex: none; display: flex; align-items: center; height: 21px; padding-right: 4px;
  border: 1px solid #2c2c2c; border-radius: 3px; background: linear-gradient(#6c6c6c, #585858);
}
.pick select { flex: 1; min-width: 0; padding: 0 0 0 8px; }
.aamode { width: 56px; }
.workspace-pick { width: 106px; margin-left: auto; }
.aligns { display: flex; gap: 1px; }
.aligns button { width: 22px; height: 22px; border: 1px solid transparent; border-radius: 2px; }
.aligns .on { background: #393939; border-color: #2b2b2b; }
.textcolor { width: 26px; height: 16px; background: #f00; border: 1px solid #262626; }

/* workspace */
.workspace { flex: 1; min-height: 0; display: flex; }
.dockhead {
  height: 12px; display: flex; align-items: center; background: #383838;
  border-bottom: 1px solid #2a2a2a;
}
.left { padding-left: 4px; }
.tools { flex: none; width: 41px; border: solid #2b2b2b; border-width: 0 2px 0 1px; display: flex; flex-direction: column; }
.toolbody { flex: 1; border-top: 1px solid #666; }
.grip-h { display: block; width: 20px; height: 4px; margin: 3px auto 0; background: repeating-linear-gradient(90deg, #2d2d2d 0 1px, #535353 1px 2px); }
.toollist { display: flex; flex-direction: column; padding-top: 6px; }
.toollist button { width: 36px; height: 26px; position: relative; }
.toollist svg { width: 36px; height: 26px; }
.toollist .on { border-radius: 3px; background: #363636; outline: 1px solid #2b2b2b; outline-offset: -1px; width: 31px; margin-left: 3px; }
.toollist .on svg { margin-left: -2px; }
.more::after {
  content: ""; position: absolute; left: 27px; bottom: 3px;
  border: solid transparent; border-width: 0 0 3px 3px; border-bottom-color: #e4e4e4;
}
.on.more::after { left: 24px; }
.toollist hr { width: 29px; height: 1px; margin: 1px 0 1px 4px; border: 0; background: #3a3a3a; }
.swaptools { display: flex; justify-content: space-between; width: 29px; margin: 2px 0 0 3px; height: 13px; align-items: center; }
.swatches { position: relative; }
.swatches button { position: absolute; width: 19px; height: 19px; border: 1px solid #fff; outline: 1px solid #303030; outline-offset: 0; }
.swatches .fg { left: 1px; top: 1px; background: #f00; }
.swatches .bg { left: 11px; top: 11px; background: #e8a2ea; }
.big { width: 31px; height: 32px; margin: 3px 0 0 3px; }
.modes { padding-top: 1px; }

/* document */
.document {
  flex: 1; min-width: 0; display: grid; grid-template: 19px 1fr 15px / 1fr 18px;
  background: #282828;
}
.tabs { grid-column: 1 / -1; display: flex; background: #3a3a3a; }
.tab { display: flex; align-items: center; gap: 8px; padding: 0 7px 0 9px; border-right: 1px solid #2a2a2a; color: #8f8f8f; white-space: nowrap; line-height: 19px; }
.tab.on { background: #535353; color: #e2e2e2; }
.tab button { color: #d8d8d8; }
.stage { display: flex; align-items: center; justify-content: center; overflow: hidden; }
.artboard { position: relative; flex: none; width: 1280px; height: 720px; background: #fff; box-shadow: 0 0 3px #111; }
.ants { position: absolute; left: 454px; top: 298px; overflow: visible; }
.ants text {
  font: 300 42px "Noto Sans CJK SC", sans-serif; fill: #ff8c8c;
  stroke: #000; stroke-width: 1px; stroke-dasharray: 4 6;
}
.pointer-a { position: absolute; left: 736px; top: 350px; filter: drop-shadow(2px 2px 2px #888); }
.vscroll { background: linear-gradient(90deg, #383838, #454545); }
.status { grid-column: 1 / -1; display: flex; background: linear-gradient(#454545, #3a3a3a); font-size: 11px; line-height: 15px; }
.status > * { display: flex; align-items: center; justify-content: center; }
.zoom { width: 48px; background: #3b3b3b; }
.cam { width: 24px; background: #484848; border-right: 1px solid #333; }
.doc { width: 170px; background: #535353; }
.go { width: 13px; background: #4b4b4b; border-left: 1px solid #2e2e2e; }

/* right side */
.right {
  flex: none; display: grid; grid-template: 12px 1fr / 40px 240px;
  border: solid #2b2b2b; border-width: 0 1px 0 2px; width: 283px;
}
.both { grid-column: 1 / -1; justify-content: space-between; padding: 0 4px 0 26px; }
.dock { border-right: 2px solid #2b2b2b; }
.dockgroup { height: 41px; border-top: 1px solid #666; border-bottom: 1px solid #2b2b2b; }
.dockgroup.tall { height: 69px; }
.dockgroup button { width: 40px; height: 28px; padding-top: 2px; }
.panels { display: flex; flex-direction: column; min-height: 0; }
.panel { border-bottom: 3px solid #2b2b2b; }
.ptabs { display: flex; height: 18px; background: #393939; border-bottom: 1px solid #606060; line-height: 17px; }
.ptabs a { padding: 0 7px; color: #8d8d8d; border-right: 1px solid #2b2b2b; height: 17px; }
.ptabs .on { background: #535353; color: #e8e8e8; height: 18px; }
.ptabs button { margin-left: auto; margin-right: 4px; }
.color { display: grid; grid-template-columns: 38px 1fr; padding: 10px 24px 7px 4px; row-gap: 8px; }
.colorleft { display: flex; flex-direction: column; justify-content: space-between; padding-bottom: 5px; }
.small { width: 29px; height: 31px; }
.gamut { display: flex; align-items: center; gap: 4px; margin-left: 6px; }
.gamut i { width: 13px; height: 13px; background: #e2411d; border: 1px solid #fff; outline: 1px solid #2e2e2e; }
.channels { display: grid; grid-template-columns: 11px 122px 38px; row-gap: 5px; }
.channels label { line-height: 16px; }
.num { width: 38px; height: 20px; padding: 0 2px; background: #3a3a3a; border: 1px solid #2c2c2c; margin-left: 1px; }
.range {
  appearance: none; width: 122px; height: 16px; margin: 2px 0 0; background:
    linear-gradient(90deg, var(--a), var(--b)) 6px 1px / 110px 4px no-repeat,
    linear-gradient(#999, #999) 5px 0 / 112px 6px no-repeat;
}
.range::-webkit-slider-thumb {
  appearance: none; width: 10px; height: 8px; margin-top: 7px;
  background: linear-gradient(#eee, #888); clip-path: polygon(50% 0, 100% 60%, 100% 100%, 0 100%, 0 60%);
}
.r { --a: #000; --b: #f00; } .g { --a: #f00; --b: #ff0; } .b { --a: #f00; --b: #f0f; }
.spectrum { grid-column: 1 / -1; display: flex; height: 16px; margin-right: -6px; border: 1px solid #2e2e2e; }
.hues {
  flex: 1; background:
    linear-gradient(#fff, #fff0 45%, #0000 50%, #000),
    linear-gradient(90deg, #e8281e, #fff200 17%, #00a03c 33%, #00aeef 50%, #2e2587 67%, #ec008c 84%, #ed1c24);
}
.bw { width: 8px; background: linear-gradient(#fff 50%, #000 50%); }

.adjust { padding: 5px 30px 1px 0; }
.adjust p { margin: 0 0 8px 9px; }
.adjrow { display: flex; justify-content: center; gap: 6px; margin-bottom: 9px; }
.adjrow button, .adjrow svg { width: 18px; height: 18px; }

.layers { flex: 1; min-height: 0; display: flex; flex-direction: column; border: 0; }
.lrow { flex: none; display: flex; align-items: center; height: 28px; padding: 0 4px; border-bottom: 1px solid #3c3c3c; }
.lrow.filter { height: 27px; }
.lrow.locking { height: 30px; }
.kind { width: 71px; padding-left: 8px; }
.kind select { padding-left: 4px; }
.filters { display: flex; margin-left: 15px; }
.filters button { width: 24px; height: 20px; }
.switch { width: 9px; height: 17px; margin-left: auto; background: #333; border: 1px solid #2c2c2c; align-items: flex-start; }
.switch i { width: 7px; height: 7px; background: #888; }
.blend { width: 111px; }
.lbl { margin-left: auto; padding-right: 5px; }
.pct { display: flex; width: 56px; height: 20px; border: 1px solid #2c2c2c; }
.pct input { width: 35px; border: 0; background: #3a3a3a; padding: 0 0 0 2px; }
.pct button { flex: 1; border-left: 1px solid #2c2c2c; background: linear-gradient(#6b6b6b, #595959); }
.lock { width: 34px; padding-left: 3px; }
.locks { display: flex; }
.locks button { width: 22px; height: 20px; }
.listwrap { flex: 1; position: relative; display: flex; min-height: 0; background: #464646; }
.list { flex: 1; list-style: none; margin: 0; padding: 0; }
.list li { position: relative; display: flex; align-items: center; height: 26px; background: #535353; border-bottom: 1px solid #333; }
.vis { width: 31px; align-self: stretch; display: flex; align-items: center; justify-content: center; background: #535353; border-right: 1px solid #333; }
.thumb { width: 32px; height: 19px; margin: 0 10px 0 3px; border: 1px solid #1a1a1a; }
.checks { position: relative; background: repeating-conic-gradient(#fff 0 25%, #ccc 0 50%) 0 0 / 8px 8px; }
.checks::before {
  content: ""; position: absolute; inset: -3px; border: 1px solid #fff;
  clip-path: polygon(0 0, 30% 0, 30% 100%, 70% 100%, 70% 0, 100% 0, 100% 100%, 0 100%);
}
.white { background: #fff; }
.type { border: 0; display: flex; align-items: center; justify-content: center; }
.list .on { background: #6b7c93; }
.name { flex: 1; color: #fff; }
.locked { margin-right: 17px; }
.hand { position: absolute; left: 51px; top: 13px; z-index: 1; }
.lscroll { width: 15px; background: linear-gradient(90deg, #3a3a3a, #454545); }
.pointer-b { position: absolute; left: -29px; top: 27px; z-index: 2; filter: drop-shadow(2px 2px 2px #333); }
.lfoot { flex: none; display: flex; justify-content: center; height: 17px; border-top: 1px solid #6a6a6a; padding: 3px 0 0 9px; }
.lfoot button { width: 27px; height: 12px; }
.lfoot .fx { font: italic bold 14px/12px "Liberation Serif", serif; color: #ddd; }

.ime {
  position: absolute; right: 260px; bottom: 2px; display: flex; align-items: center; gap: 4px;
  height: 25px; padding: 0 5px; background: #fff; color: #333; border-radius: 5px;
  font: 13px/20px "Liberation Sans", "Noto Sans CJK SC", sans-serif; box-shadow: 0 0 3px #222;
}
.brand { position: absolute; right: 10px; bottom: 7px; display: flex; align-items: center; gap: 2px; pointer-events: none; }
.brand div { display: flex; flex-direction: column; }
.brand b { font: bold 21px/28px "Noto Sans CJK SC", sans-serif; color: #23598f; }
.brand span { font: bold 16px/18px "Liberation Sans", sans-serif; color: #22713f; }
```
